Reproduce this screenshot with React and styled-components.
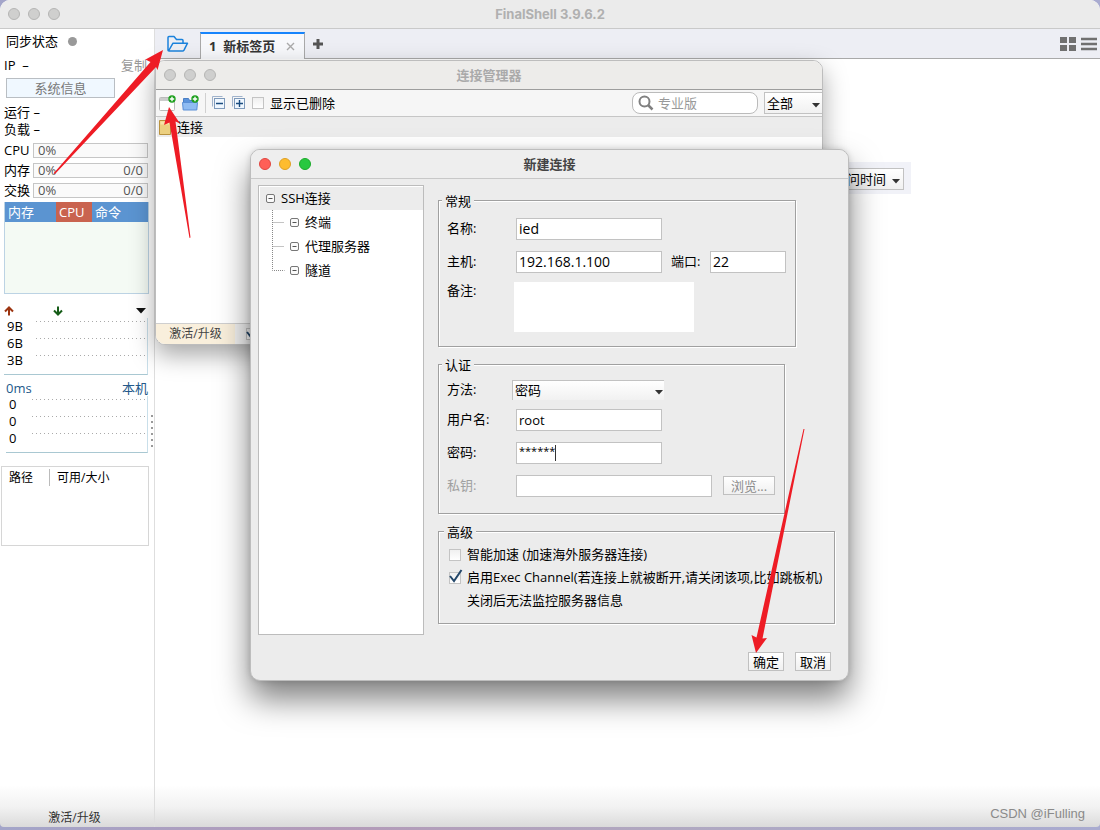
import { useState } from 'react';
import styled, { createGlobalStyle } from 'styled-components';

const GlobalStyle = createGlobalStyle`
  * {
    box-sizing: border-box;
  }
  body {
    margin: 0;
    color: #000;
    font-family: 'Open Sans', 'Noto Sans CJK SC', sans-serif;
    font-size: 13px;
    line-height: 17px;
  }
  button, input, select, textarea {
    font: inherit;
    color: inherit;
    margin: 0;
  }
`;

const Desktop = styled.div`
  position: relative;
  display: flex;
  min-height: 100vh;
  padding-bottom: 3px;
  overflow: hidden;
  background: linear-gradient(90deg, #a3a5c9, #b39ab8 30%, #b0a8c0 60%, #a9abd0);
`;
const AppWindow = styled.div`
  flex: 1;
  min-width: 0;
  display: flex;
  flex-direction: column;
  border-radius: 10px 10px 4px 4px;
  background: linear-gradient(to top, #dadada, #f2f2f2 20px, #fff 42px);
  overflow: hidden;
`;

/* title bars */
const TitleBar = styled.header`
  display: grid;
  grid-template-columns: 60px 1fr 60px;
  align-items: center;
  height: ${(props) => props.$height}px;
  padding: 0 8px;
  background: ${(props) => props.$bg};
  border-bottom: 1px solid ${(props) => props.$line};
`;
const Title = styled.h1`
  margin: 0;
  text-align: center;
  font-family: Inter, 'Noto Sans CJK SC', sans-serif;
  font-size: 13px;
  line-height: 17px;
  font-weight: 700;
  color: ${(props) => props.$color};
`;
const Lights = styled.div`
  display: flex;
  gap: 8px;
`;
const Light = styled.button`
  width: 12px;
  height: 12px;
  padding: 0;
  border: 1px solid ${(props) => props.$edge};
  border-radius: 50%;
  background: ${(props) => props.$fill};
`;

/* side panel */
const Columns = styled.div`
  flex: 1;
  display: flex;
`;
const Sidebar = styled.aside`
  position: relative;
  flex: 0 0 155px;
  min-width: 0;
  display: flex;
  flex-direction: column;
  border-right: 1px solid #dedede;
`;
const SyncRow = styled.div`
  display: flex;
  align-items: center;
  gap: 10px;
  height: 25px;
  padding-left: 6px;
`;
const SyncDot = styled.span`
  width: 9px;
  height: 9px;
  border-radius: 50%;
  background: #999;
`;
const IpRow = styled.div`
  display: flex;
  align-items: center;
  justify-content: space-between;
  height: 22px;
  padding: 0 7px 0 4px;
`;
const CopyLink = styled.a`
  color: #999;
  text-decoration: none;
`;
const InfoButton = styled.button`
  width: 109px;
  height: 20px;
  margin: 2px 0 6px 6px;
  padding: 0;
  border: 1px solid #b9bec3;
  background: #f0f8ff;
  color: #777;
  line-height: 16px;
`;
const StatLine = styled.div`
  padding-left: 4px;
`;
const Meters = styled.div`
  margin: 2px 6px 2px 4px;
`;
const MeterRow = styled.div`
  display: flex;
  align-items: center;
  height: 20px;
`;
const MeterName = styled.span`
  flex: 0 0 29px;
  white-space: nowrap;
`;
const MeterBar = styled.div`
  flex: 1;
  display: flex;
  align-items: center;
  justify-content: space-between;
  height: 15px;
  padding: 0 4px;
  border: 1px solid #c6c6c6;
  background: #fafafa;
  color: #555;
`;
const ProcessBox = styled.div`
  height: 92px;
  margin: 0 5px 0 4px;
  border: 1px solid #bcd3e4;
  border-top: 0;
  background: #f4faf4;
`;
const ProcessTable = styled.table`
  width: 100%;
  border-collapse: collapse;
  table-layout: fixed;
  background: #5b94d1;
  color: #fff;
`;
const ProcessHead = styled.th`
  width: ${(props) => props.$width};
  height: 20px;
  padding: 0 3px;
  text-align: left;
  font-weight: 400;
  background: ${(props) => (props.$active ? '#c9634f' : 'transparent')};
`;
const TrafficRow = styled.div`
  display: flex;
  align-items: center;
  height: 14px;
  margin: 10px 8px 0 4px;
`;
const TrafficArrow = styled.svg`
  flex: 0 0 10px;
  margin-right: 39px;
`;
const TrafficMenu = styled.svg`
  margin-left: auto;
`;
const Chart = styled.div`
  margin: 0 6px 0 ${(props) => props.$inset}px;
  padding-bottom: 5px;
  border-right: 1px solid #c9dfea;
  border-bottom: 1px solid #a9c8d2;
`;
const ChartRow = styled.div`
  display: flex;
  padding-left: 3px;
`;
const ChartLabel = styled.span`
  flex: 0 0 ${(props) => props.$width}px;
`;
const ChartDots = styled.svg`
  flex: 1;
  min-width: 0;
  width: 0;
  height: 8px;
  margin-right: 2px;
`;
const LatencyRow = styled.div`
  display: flex;
  justify-content: space-between;
  height: 21px;
  padding: 5px 6px 0;
  color: #24598a;
`;
const DiskBox = styled.div`
  height: 80px;
  margin: 13px 5px 0 1px;
  padding-top: 2px;
  border: 1px solid #d6d6d6;
`;
const DiskTable = styled.table`
  border-collapse: collapse;
  font-size: 12px;
`;
const DiskHead = styled.th`
  height: 16px;
  padding: 0 16px 0 7px;
  text-align: left;
  font-weight: 400;
  border-right: ${(props) => (props.$divider ? '1px solid #bbb' : '0')};
`;
const SideFooter = styled.a`
  margin-top: auto;
  padding: 0 5px 1px 0;
  text-align: center;
  font-size: 12px;
  color: #333;
  text-decoration: none;
`;
const Grip = styled.svg`
  position: absolute;
  top: 385px;
  right: 0;
`;

/* main area */
const Main = styled.main`
  flex: 1;
  min-width: 0;
  display: flex;
  flex-direction: column;
`;
const TabBar = styled.nav`
  display: flex;
  align-items: center;
  height: 30px;
  background: #edeef4;
  border-bottom: 1px solid #a9a9a9;
`;
const IconButton = styled.button`
  display: flex;
  padding: 0;
  border: 0;
  background: transparent;
`;
const OpenButton = styled(IconButton)`
  flex: 0 0 45px;
  justify-content: center;
`;
const Tab = styled.div`
  display: flex;
  align-items: center;
  justify-content: space-between;
  align-self: flex-end;
  width: 105px;
  height: 27px;
  margin-bottom: -1px;
  padding: 0 9px 0 8px;
  border: 1px solid #a9a9a9;
  border-top: 2px solid #1684fc;
  border-bottom: 0;
  background: #f7f8fb;
  font-weight: 700;
  color: #333;
  white-space: pre;
`;
const AddButton = styled(IconButton)`
  margin-left: 7px;
`;
const ViewButtons = styled.div`
  display: flex;
  gap: 5px;
  margin-left: auto;
  padding-right: 3px;
`;
const FilterBar = styled.div`
  display: flex;
  justify-content: flex-end;
  width: 756px;
  margin-top: 103px;
  padding: 6px 7px 4px;
  background: #f1f2f8;
`;

/* floating windows */
const FloatingWindow = styled.section`
  position: absolute;
  top: ${(props) => props.$top}px;
  left: ${(props) => props.$left}px;
  width: ${(props) => props.$width}px;
  display: flex;
  flex-direction: column;
  border: 1px solid #bdbdbd;
  border-radius: 10px;
  overflow: hidden;
  background: ${(props) => props.$bg};
  box-shadow: ${(props) => props.$shadow};
`;
const Toolbar = styled.div`
  display: flex;
  align-items: center;
  gap: 6px;
  height: 27px;
  padding-left: 3px;
  background: #f6f6f6;
  border-bottom: 1px solid #c6c6c6;
`;
const Separator = styled.span`
  width: 1px;
  height: 20px;
  background: #d0d0d0;
`;
const SearchBox = styled.label`
  display: flex;
  align-items: center;
  gap: 4px;
  width: 126px;
  height: 22px;
  margin-left: auto;
  padding: 0 5px;
  border: 1px solid #bbb;
  border-radius: 8px;
  background: #fff;
`;
const SearchInput = styled.input`
  flex: 1;
  min-width: 0;
  padding: 0;
  border: 0;
  outline: 0;
  background: transparent;
  &::placeholder {
    color: #999;
  }
`;
const SelectWrap = styled.span`
  position: relative;
  display: flex;
  width: ${(props) => props.$width}px;
  height: ${(props) => props.$height || 22}px;
`;
const Select = styled.select`
  appearance: none;
  width: 100%;
  padding: 0 2px;
  border: 1px solid #c2c2c2;
  border-width: ${(props) => props.$edges || '1px'};
  border-radius: 0;
  outline: 0;
  background: linear-gradient(#fff, #f1f1f1);
`;
const Caret = styled.svg`
  position: absolute;
  top: 50%;
  right: ${(props) => props.$right}px;
  pointer-events: none;
`;
const TreeRoot = styled.div`
  display: flex;
  align-items: center;
  gap: 6px;
  height: 20px;
  margin-left: 1px;
  padding-left: 2px;
  background: #ececec;
`;
const ManagerBody = styled.div`
  height: 186px;
`;
const StatusBar = styled.footer`
  display: flex;
  align-items: center;
  gap: 11px;
  height: 21px;
  border-top: 1px solid #cfcfcf;
  background: #f2f2f2;
`;
const Upgrade = styled.a`
  width: 79px;
  height: 20px;
  padding-top: 1px;
  text-align: center;
  background: #f9efdc;
  color: #444;
  font-size: 12px;
  text-decoration: none;
`;

/* new connection dialog */
const DialogBody = styled.div`
  display: flex;
  gap: 14px;
  padding: 6px 12px 0 7px;
`;
const Tree = styled.ul`
  flex: 0 0 166px;
  height: 450px;
  margin: 0;
  padding: 1px 0 0 1px;
  border: 1px solid #bcbcbc;
  background: #fff;
  list-style: none;
`;
const TreeItem = styled.li`
  display: flex;
  align-items: center;
  gap: 6px;
  height: 23px;
  padding-left: 6px;
  background: #ececec;
`;
const Branch = styled.ul`
  margin: 0 0 0 12px;
  padding: 0;
  list-style: none;
`;
const BranchItem = styled.li`
  display: flex;
  align-items: center;
  gap: 5px;
  height: 24px;
`;
const BranchText = styled.span`
  padding-left: 1px;
`;
const Form = styled.form`
  flex: 1;
  display: flex;
  flex-direction: column;
  align-items: flex-start;
  gap: 8px;
  padding-top: 6px;
`;
const Group = styled.fieldset`
  width: ${(props) => props.$width}px;
  margin: 0;
  padding: ${(props) => props.$pad};
  border: 1px solid #a0a0a0;
  box-shadow: 1px 1px 0 #fff, inset 1px 1px 0 #fff;
`;
const Legend = styled.legend`
  height: 18px;
  margin-left: -5px;
  padding: 0 3px;
  background: #ececec;
  line-height: 20px;
`;
const FieldRow = styled.div`
  display: flex;
  align-items: center;
  min-height: ${(props) => props.$height || 33}px;
`;
const MemoRow = styled.div`
  display: flex;
  align-items: flex-start;
  padding-top: 4px;
`;
const FieldLabel = styled.label`
  flex: 0 0 ${(props) => props.$width}px;
  color: ${(props) => (props.$off ? '#a0a0a0' : 'inherit')};
`;
const Gap = styled.span`
  flex: 0 0 ${(props) => props.$width}px;
`;
const TextInput = styled.input`
  width: ${(props) => props.$width}px;
  height: 22px;
  padding: 0 2px;
  border: 1px solid #c2c2c2;
  outline: 0;
  background: #fff;
  font-size: ${(props) => props.$size || 14}px;
`;
const PasswordInput = styled(TextInput)`
  padding-bottom: 5px;
`;
const PasswordWrap = styled.span`
  position: relative;
  display: flex;
`;
const TextCursor = styled.span`
  position: absolute;
  top: 3px;
  left: 39px;
  width: 1px;
  height: 16px;
  background: #333;
`;
const Memo = styled.textarea`
  width: 180px;
  height: 50px;
  padding: 2px;
  border: 0;
  outline: 0;
  resize: none;
  background: #fff;
`;
const PushButton = styled.button`
  width: ${(props) => props.$width}px;
  height: 19px;
  padding: 0;
  border: 1px solid #c0c0c0;
  background: linear-gradient(#fff, #f0f0f0);
  line-height: 16px;
  &:disabled {
    color: #8c8c8c;
  }
`;
const CheckLabel = styled.label`
  display: flex;
  align-items: center;
  gap: 6px;
  height: 23px;
  white-space: nowrap;
`;
const CheckBox = styled.input`
  appearance: none;
  display: block;
  width: 12px;
  height: 12px;
  border: 1px solid #c4c4c4;
  background: linear-gradient(#f0f0f0, #fff);
`;
const CheckWrap = styled.span`
  position: relative;
  display: flex;
`;
const CheckMark = styled.svg`
  position: absolute;
  left: 0;
  bottom: 1px;
  pointer-events: none;
`;
const Hint = styled.p`
  margin: 0;
  padding: 3px 0 0 18px;
`;
const DialogFooter = styled.footer`
  display: flex;
  justify-content: flex-end;
  gap: 11px;
  padding: 17px 17px 9px;
`;

/* overlays */
const Pointers = styled.svg`
  position: absolute;
  top: 0;
  left: 0;
  pointer-events: none;
`;
const Watermark = styled.span`
  position: absolute;
  right: 15px;
  bottom: 8px;
  font-family: 'Liberation Sans', sans-serif;
  font-size: 13px;
  color: #8a8a8a;
`;

const grey = { $fill: '#cfcfce', $edge: '#b5b5b4' };
const lightColors = [
  { $fill: '#ff5f57', $edge: '#e14640' },
  { $fill: '#febc2e', $edge: '#dfa023' },
  { $fill: '#28c840', $edge: '#1aab29' },
];

const WindowLights = ({ active }) => (
  <Lights>
    {['关闭', '最小化', '缩放'].map((name, i) => (
      <Light key={name} type="button" aria-label={name} {...(active ? lightColors[i] : grey)} />
    ))}
  </Lights>
);

const DownCaret = ({ right }) => (
  <Caret $right={right} width="8" height="5" viewBox="0 0 8 5" aria-hidden="true">
    <path d="M0 0h8L4 4.5z" fill="#333" />
  </Caret>
);

const Dropdown = ({ width, height, right, edges, ...rest }) => (
  <SelectWrap $width={width} $height={height}>
    <Select $edges={edges} id={rest.id} aria-label={rest.label}>
      <option>{rest.value}</option>
    </Select>
    <DownCaret right={right} />
  </SelectWrap>
);

const Check = ({ defaultChecked = false, label }) => {
  const [checked, setChecked] = useState(defaultChecked);
  return (
    <CheckWrap>
      <CheckBox
        type="checkbox"
        aria-label={label}
        checked={checked}
        onChange={(e) => setChecked(e.target.checked)}
      />
      {checked && (
        <CheckMark width="14" height="14" viewBox="0 0 14 14" aria-hidden="true">
          <path d="M1 7l4 5L12.500 1" fill="none" stroke="#24486b" strokeWidth="2" />
        </CheckMark>
      )}
    </CheckWrap>
  );
};

const ChartLines = ({ labels, labelWidth, inset }) => (
  <Chart $inset={inset}>
    {labels.map((text, i) => (
      <ChartRow key={i}>
        <ChartLabel $width={labelWidth}>{text}</ChartLabel>
        <ChartDots aria-hidden="true">
          <line x1="0" y1="3.5" x2="100%" y2="3.5" stroke="#aaa" strokeDasharray="1 3" />
        </ChartDots>
      </ChartRow>
    ))}
  </Chart>
);

const Toggle = () => (
  <svg width="9" height="9" viewBox="0 0 9 9" aria-hidden="true">
    <rect x="0.5" y="0.5" width="8" height="8" rx="1.500" fill="#fafafa" stroke="#777" />
    <path d="M2.500 4.500h4" stroke="#555" />
  </svg>
);

const PlusBadge = () => (
  <g>
    <circle cx="13" cy="4" r="3.700" fill="#1da01d" />
    <path d="M13 1.800v4.400M10.800 4h4.400" stroke="#fff" strokeWidth="1.400" />
  </g>
);

const StackIcon = ({ plus }) => (
  <svg width="14" height="14" viewBox="0 0 14 14" aria-hidden="true">
    <path d="M0.500 10.500v-10h10" fill="none" stroke="#9fb2cb" />
    <rect x="2.500" y="2.500" width="10" height="10" fill="#eff7ff" stroke="#7f9abb" />
    <path d="M4 7.500h7" stroke="#1b4d80" strokeWidth="1.400" />
    {plus && <path d="M7.500 4v7" stroke="#1b4d80" strokeWidth="1.400" />}
  </svg>
);

const StatusPanel = () => (
  <Sidebar>
    <SyncRow>
      同步状态
      <SyncDot />
    </SyncRow>
    <IpRow>
      <span>IP&nbsp; –</span>
      <CopyLink href="#copy">复制</CopyLink>
    </IpRow>
    <InfoButton type="button">系统信息</InfoButton>
    <StatLine>运行 –</StatLine>
    <StatLine>负载 –</StatLine>
    <Meters>
      {[['CPU', ''], ['内存', '0/0'], ['交换', '0/0']].map(([name, usage]) => (
        <MeterRow key={name}>
          <MeterName>{name}</MeterName>
          <MeterBar>
            <span>0%</span>
            <span>{usage}</span>
          </MeterBar>
        </MeterRow>
      ))}
    </Meters>
    <ProcessBox>
      <ProcessTable>
        <thead>
          <tr>
            <ProcessHead $width="51px">内存</ProcessHead>
            <ProcessHead $width="36px" $active>CPU</ProcessHead>
            <ProcessHead>命令</ProcessHead>
          </tr>
        </thead>
      </ProcessTable>
    </ProcessBox>
    <TrafficRow>
      <TrafficArrow width="10" height="10" viewBox="0 0 10 10" aria-hidden="true">
        <path d="M5 9.500V1.500M1 5.500l4-4 4 4" fill="none" stroke="#9c3410" strokeWidth="2" />
      </TrafficArrow>
      <TrafficArrow width="10" height="10" viewBox="0 0 10 10" aria-hidden="true">
        <path d="M5 0.500v8M1 4.500l4 4 4-4" fill="none" stroke="#155c17" strokeWidth="2" />
      </TrafficArrow>
      <TrafficMenu width="10" height="6" viewBox="0 0 10 6" aria-hidden="true">
        <path d="M0 0h10L5 5.500z" fill="#111" />
      </TrafficMenu>
    </TrafficRow>
    <ChartLines labels={['9B', '6B', '3B']} labelWidth={29} inset={4} />
    <LatencyRow>
      <span>0ms</span>
      <span>本机</span>
    </LatencyRow>
    <ChartLines labels={['0', '0', '0']} labelWidth={23} inset={6} />
    <DiskBox>
      <DiskTable>
        <thead>
          <tr>
            <DiskHead $divider>路径</DiskHead>
            <DiskHead>可用/大小</DiskHead>
          </tr>
        </thead>
      </DiskTable>
    </DiskBox>
    <SideFooter href="#upgrade">激活/升级</SideFooter>
    <Grip width="4" height="34" viewBox="0 0 4 34" aria-hidden="true">
      <path d="M2 1v32" stroke="#999" strokeWidth="2" strokeDasharray="2 4" />
    </Grip>
  </Sidebar>
);

const TabStrip = () => (
  <TabBar>
    <OpenButton type="button" aria-label="打开">
      <svg width="22" height="18" viewBox="0 0 22 18" aria-hidden="true">
        <path
          d="M1 15.500V2.500Q1 1.500 2 1.500h5l2.500 3H15q1 0 1 1V8M1.500 16L6 8.200h14.500L17 15.200q-.5.9-1.500.9H2q-1 0-1-1"
          fill="none"
          stroke="#1b82dc"
          strokeWidth="1.500"
          strokeLinejoin="round"
        />
      </svg>
    </OpenButton>
    <Tab>
      <span>{'1  新标签页'}</span>
      <IconButton type="button" aria-label="关闭标签">
        <svg width="9" height="9" viewBox="0 0 9 9" aria-hidden="true">
          <path d="M1 1l7 7M8 1L1 8" stroke="#aaa" strokeWidth="1.400" />
        </svg>
      </IconButton>
    </Tab>
    <AddButton type="button" aria-label="新建标签">
      <svg width="12" height="12" viewBox="0 0 12 12" aria-hidden="true">
        <path d="M6 1v10M1 6h10" stroke="#555" strokeWidth="3" />
      </svg>
    </AddButton>
    <ViewButtons>
      <IconButton type="button" aria-label="网格">
        <svg width="16" height="14" viewBox="0 0 16 14" aria-hidden="true">
          <path d="M0 0h7v6H0zM9 0h7v6H9zM0 8h7v6H0zM9 8h7v6H9z" fill="#707070" />
        </svg>
      </IconButton>
      <IconButton type="button" aria-label="菜单">
        <svg width="16" height="14" viewBox="0 0 16 14" aria-hidden="true">
          <path d="M0 2h16M0 7h16M0 12h16" stroke="#707070" strokeWidth="2.400" />
        </svg>
      </IconButton>
    </ViewButtons>
  </TabBar>
);

const ConnectionManager = () => (
  <FloatingWindow
    $top={60}
    $left={155}
    $width={668}
    $bg="#fff"
    $shadow="0 10px 24px rgba(0, 0, 0, 0.35)"
  >
    <TitleBar $height={29} $bg="#edecea" $line="#9d9d9d">
      <WindowLights />
      <Title as="h2" $color="#aaa">连接管理器</Title>
    </TitleBar>
    <Toolbar>
      <IconButton type="button" aria-label="新建连接">
        <svg width="17" height="17" viewBox="0 0 17 17" aria-hidden="true">
          <rect x="0.5" y="2.500" width="15" height="13" rx="1" fill="#fff" stroke="#bbb" />
          <path d="M1 4.500h14" stroke="#ccc" strokeWidth="3" />
          <PlusBadge />
        </svg>
      </IconButton>
      <IconButton type="button" aria-label="新建文件夹">
        <svg width="17" height="17" viewBox="0 0 17 17" aria-hidden="true">
          <path d="M1.500 14V3.500h5l1 2h7V14z" fill="#5b94dc" stroke="#4a7fc4" />
          <path d="M0.500 7.500h15l-.7 7.500H1.200z" fill="#8fbcf2" stroke="#5a8fd6" />
          <PlusBadge />
        </svg>
      </IconButton>
      <Separator />
      <IconButton type="button" aria-label="全部折叠">
        <StackIcon />
      </IconButton>
      <IconButton type="button" aria-label="全部展开">
        <StackIcon plus />
      </IconButton>
      <CheckLabel>
        <Check />
        显示已删除
      </CheckLabel>
      <SearchBox>
        <svg width="16" height="16" viewBox="0 0 16 16" aria-hidden="true">
          <circle cx="6.500" cy="6.500" r="5" fill="none" stroke="#808080" strokeWidth="2" />
          <path d="M10 10l4.500 4.500" stroke="#808080" strokeWidth="2.500" />
        </svg>
        <SearchInput aria-label="搜索" placeholder="专业版" />
      </SearchBox>
      <Dropdown width={58} right={2} edges="1px 0 1px 1px" label="范围" value="全部" />
    </Toolbar>
    <TreeRoot>
      <svg width="12" height="17" viewBox="0 0 12 17" aria-hidden="true">
        <path d="M0.500 1.500h11v14h-11z" fill="#ecd080" stroke="#b8923f" />
        <path d="M1.500 2.500h9v3h-9z" fill="#f7e4a8" />
      </svg>
      连接
    </TreeRoot>
    <ManagerBody />
    <StatusBar>
      <Upgrade href="#upgrade">激活/升级</Upgrade>
      <Check defaultChecked label="启用" />
    </StatusBar>
  </FloatingWindow>
);

const ConnectionDialog = () => (
  <FloatingWindow
    $top={149}
    $left={250}
    $width={599}
    $bg="#ececec"
    $shadow="0 18px 32px rgba(0, 0, 0, 0.5), 0 0 6px rgba(0, 0, 0, 0.15)"
  >
    <TitleBar $height={29} $bg="#eee" $line="#c8c8c8">
      <WindowLights active />
      <Title as="h2" $color="#444">新建连接</Title>
    </TitleBar>
    <DialogBody>
      <Tree>
        <TreeItem>
          <Toggle />
          SSH连接
        </TreeItem>
        <li>
          <Branch>
            {['终端', '代理服务器', '隧道'].map((name, i) => (
              <BranchItem key={name}>
                <svg width="13" height="24" viewBox="0 0 13 24" aria-hidden="true">
                  <path
                    d={i === 2 ? 'M.5 0v12.500h12' : 'M.5 0v24M.5 12.500h12'}
                    fill="none"
                    stroke="#888"
                    strokeDasharray="1 1"
                  />
                </svg>
                <Toggle />
                <BranchText>{name}</BranchText>
              </BranchItem>
            ))}
          </Branch>
        </li>
      </Tree>
      <Form>
        <Group $width={358} $pad="3px 8px 14px">
          <Legend>常规</Legend>
          <FieldRow>
            <FieldLabel $width={69} htmlFor="name">名称:</FieldLabel>
            <TextInput id="name" $width={146} defaultValue="ied" />
          </FieldRow>
          <FieldRow>
            <FieldLabel $width={69} htmlFor="host">主机:</FieldLabel>
            <TextInput id="host" $width={146} defaultValue="192.168.1.100" />
            <Gap $width={9} />
            <FieldLabel $width={39} htmlFor="port">端口:</FieldLabel>
            <TextInput id="port" $width={76} defaultValue="22" />
          </FieldRow>
          <MemoRow>
            <FieldLabel $width={67} htmlFor="memo">备注:</FieldLabel>
            <Memo id="memo" />
          </MemoRow>
        </Group>
        <Group $width={347} $pad="3px 8px 11px">
          <Legend>认证</Legend>
          <FieldRow $height={27}>
            <FieldLabel $width={65} htmlFor="method">方法:</FieldLabel>
            <Dropdown id="method" width={152} height={20} right={1} edges="1px 0 0 1px" value="密码" />
          </FieldRow>
          <FieldRow>
            <FieldLabel $width={69} htmlFor="user">用户名:</FieldLabel>
            <TextInput id="user" $width={146} $size={13} defaultValue="root" />
          </FieldRow>
          <FieldRow>
            <FieldLabel $width={69} htmlFor="password">密码:</FieldLabel>
            <PasswordWrap>
              <PasswordInput id="password" $width={146} $size={11} defaultValue="******" />
              <TextCursor />
            </PasswordWrap>
          </FieldRow>
          <FieldRow>
            <FieldLabel $width={69} $off htmlFor="key">私钥:</FieldLabel>
            <TextInput id="key" $width={196} />
            <Gap $width={11} />
            <PushButton type="button" $width={52} disabled>浏览...</PushButton>
          </FieldRow>
        </Group>
        <Group $width={397} $pad="3px 8px 14px 10px">
          <Legend>高级</Legend>
          <CheckLabel>
            <Check />
            智能加速 (加速海外服务器连接)
          </CheckLabel>
          <CheckLabel>
            <Check defaultChecked />
            启用Exec Channel(若连接上就被断开,请关闭该项,比如跳板机)
          </CheckLabel>
          <Hint>关闭后无法监控服务器信息</Hint>
        </Group>
      </Form>
    </DialogBody>
    <DialogFooter>
      <PushButton type="button" $width={36}>确定</PushButton>
      <PushButton type="button" $width={36}>取消</PushButton>
    </DialogFooter>
  </FloatingWindow>
);

const App = () => {
  return (
    <Desktop>
      <GlobalStyle />
      <AppWindow>
        <TitleBar $height={29} $bg="#ebebeb" $line="#c9c9c9">
          <WindowLights />
          <Title $color="#b0b0b0">FinalShell 3.9.6.2</Title>
        </TitleBar>
        <Columns>
          <StatusPanel />
          <Main>
            <TabStrip />
            <FilterBar>
              <Dropdown width={60} right={4} label="排序" value="问时间" />
            </FilterBar>
          </Main>
        </Columns>
      </AppWindow>
      <ConnectionManager />
      <ConnectionDialog />
      <Watermark>CSDN @iFulling</Watermark>
      <Pointers width="1100" height="830" viewBox="0 0 1100 830" aria-hidden="true">
        <g fill="#ee1c25">
          <path d="M163 50L145.500 59.500 150.500 62 53.500 173.500 55 174 156 67 157.500 70z" />
          <path d="M169 107L164 125 169.500 122.500 189.500 238 190.500 237.500 175.500 121.500 180 123.500z" />
          <path d="M756 653L751.500 635 756.500 637.500 803.500 429 804.500 429 762.500 638.500 767 638z" />
        </g>
      </Pointers>
    </Desktop>
  );
};

export default App;
